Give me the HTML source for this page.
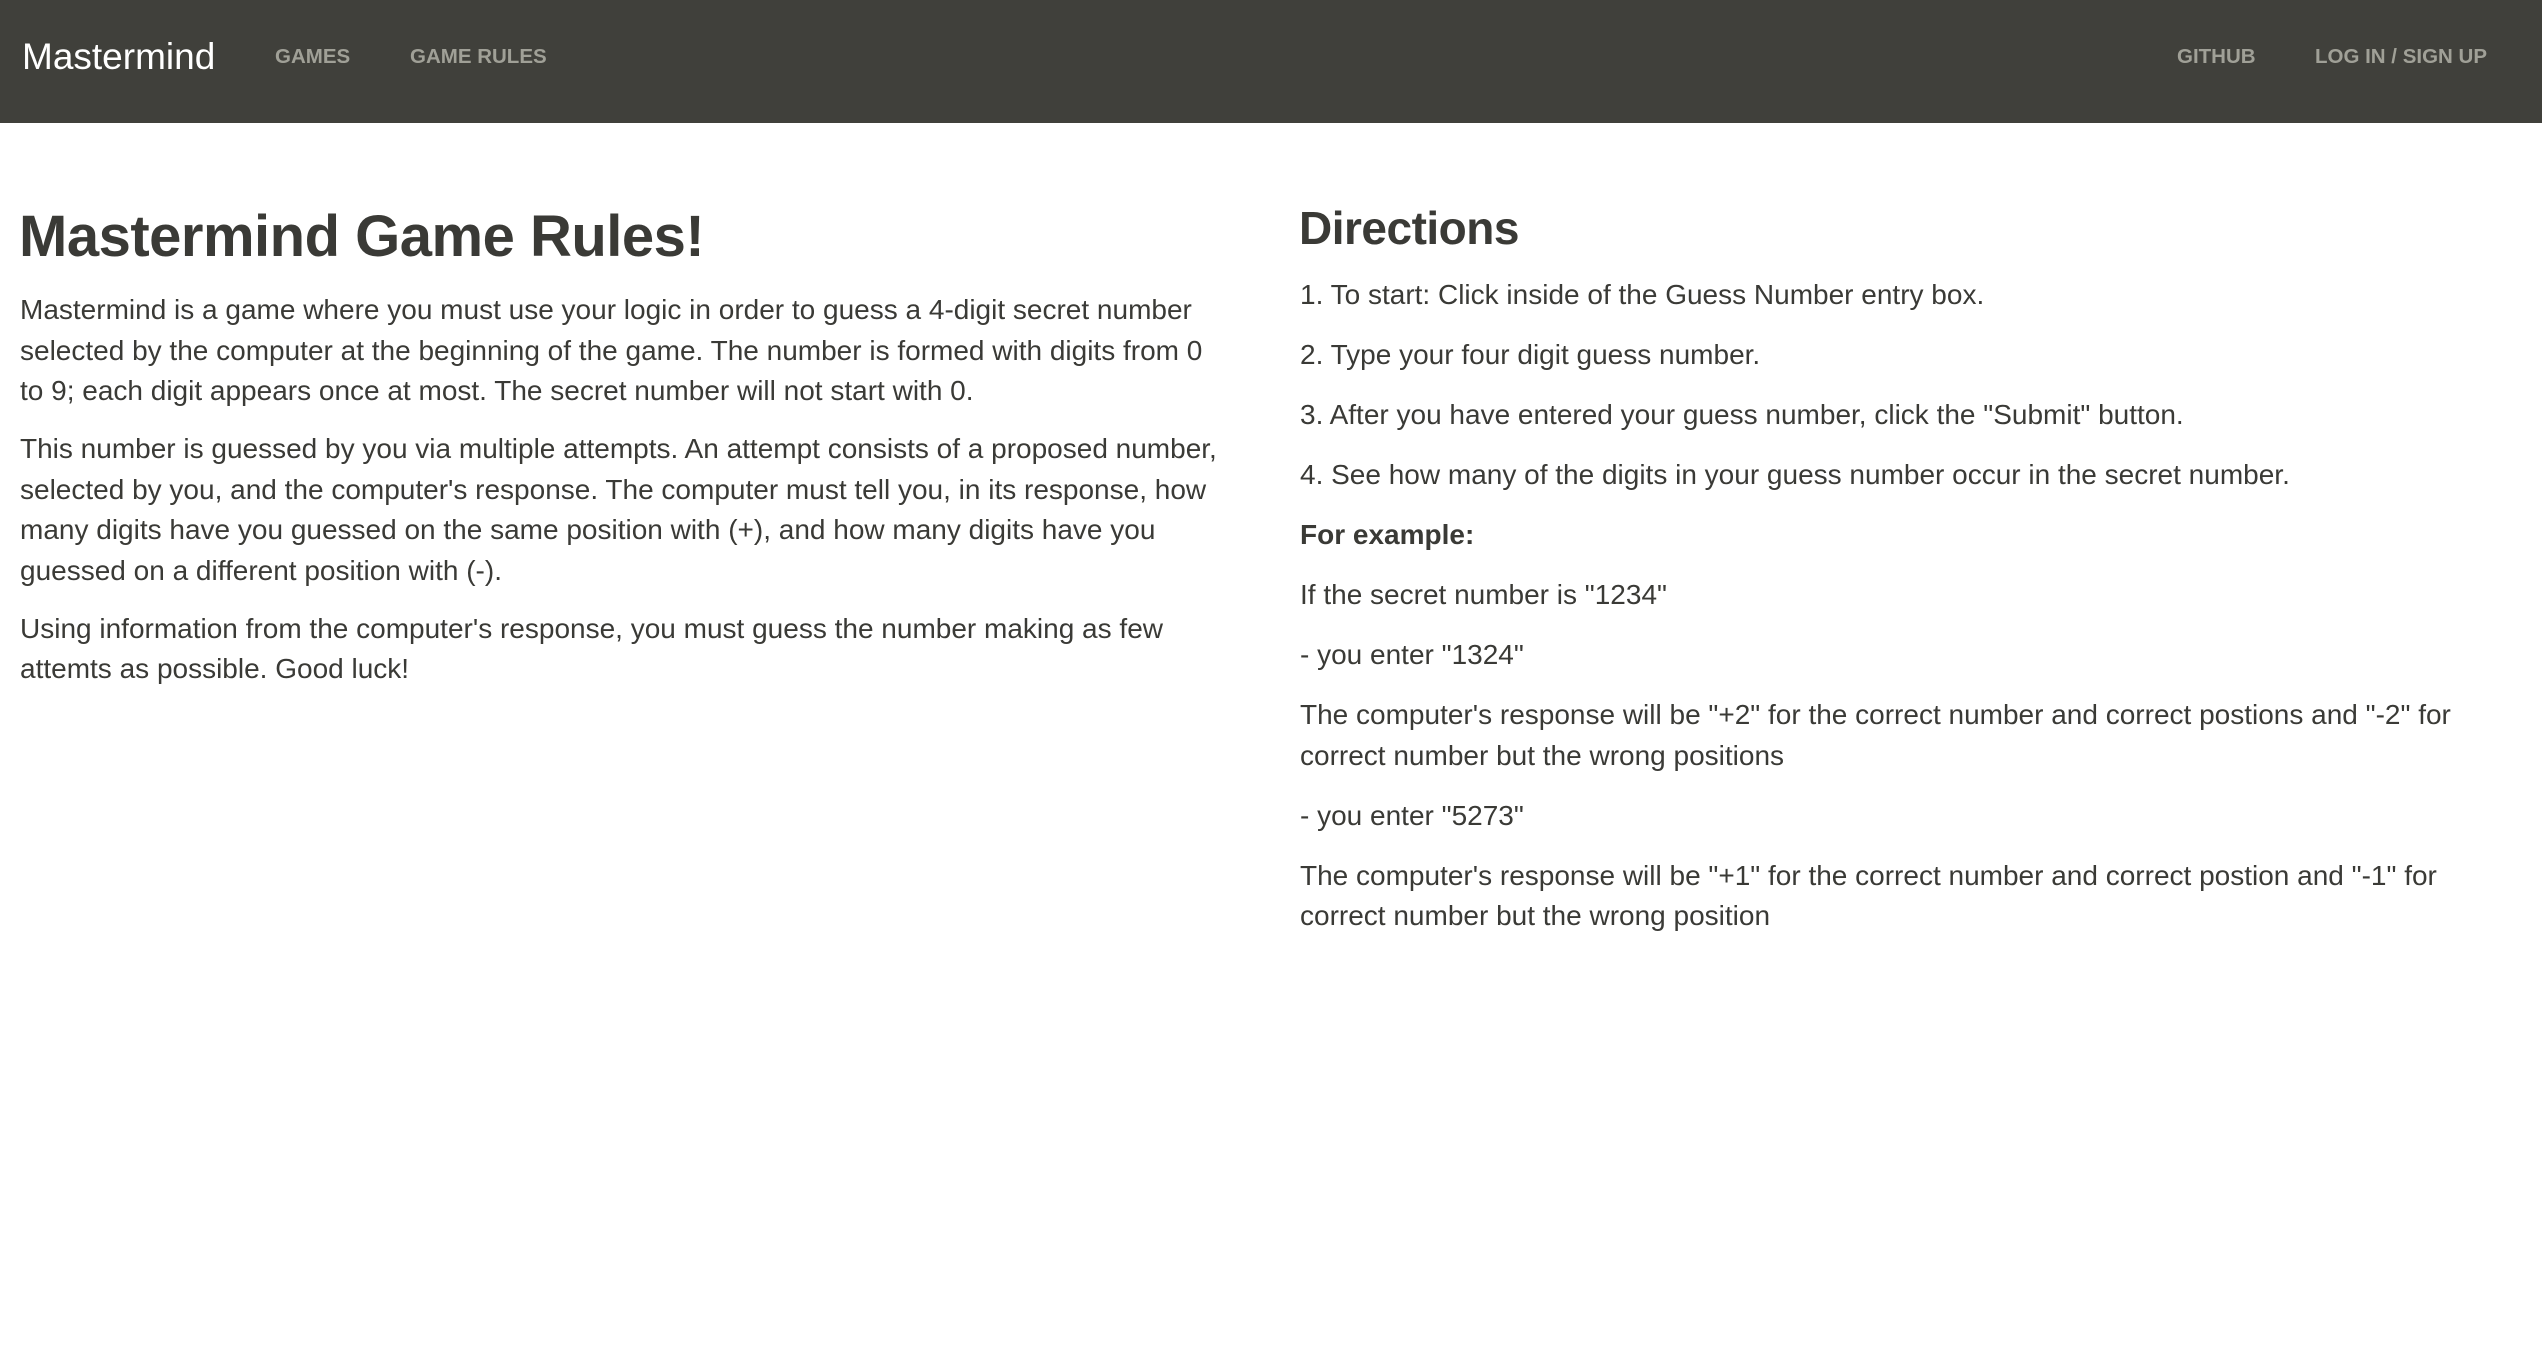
<!DOCTYPE html>
<html><head><meta charset="utf-8"><style>
body{margin:0;width:2542px;height:1372px;background:#fff;font-family:"Liberation Sans",sans-serif;color:#3a3a36;position:relative;overflow:hidden}
.nav{position:absolute;left:0;top:0;width:2542px;height:123px;background:#40403b}
.nav div{position:absolute;top:0;line-height:114px;white-space:nowrap}
.brand{left:22px;font-size:37px;color:#fff}
.lnk{font-size:20.5px;font-weight:bold;color:#a0a097}
h1{position:absolute;left:19px;top:202px;margin:0;font-size:58px;line-height:70px;font-weight:bold;white-space:nowrap;letter-spacing:-0.5px}
h2{position:absolute;left:1299px;top:198px;margin:0;font-size:46px;line-height:60px;font-weight:bold;white-space:nowrap;letter-spacing:-0.5px}
.col{position:absolute;font-size:28px;line-height:40.5px;white-space:nowrap}
.col p{margin:0 0 17.5px}
.r p{margin:0 0 19.5px}
</style></head><body>
<div class="nav">
<div class="brand">Mastermind</div>
<div class="lnk" style="left:275px">GAMES</div>
<div class="lnk" style="left:410px">GAME RULES</div>
<div class="lnk" style="left:2177px">GITHUB</div>
<div class="lnk" style="left:2315px">LOG IN / SIGN UP</div>
</div>
<h1>Mastermind Game Rules!</h1>
<div class="col" style="left:20px;top:290px">
<p>Mastermind is a game where you must use your logic in order to guess a 4-digit secret number<br>selected by the computer at the beginning of the game. The number is formed with digits from 0<br>to 9; each digit appears once at most. The secret number will not start with 0.</p>
<p>This number is guessed by you via multiple attempts. An attempt consists of a proposed number,<br>selected by you, and the computer's response. The computer must tell you, in its response, how<br>many digits have you guessed on the same position with (+), and how many digits have you<br>guessed on a different position with (-).</p>
<p>Using information from the computer's response, you must guess the number making as few<br>attemts as possible. Good luck!</p>
</div>
<h2>Directions</h2>
<div class="col r" style="left:1300px;top:275px">
<p>1. To start: Click inside of the Guess Number entry box.</p>
<p>2. Type your four digit guess number.</p>
<p>3. After you have entered your guess number, click the "Submit" button.</p>
<p>4. See how many of the digits in your guess number occur in the secret number.</p>
<p><b>For example:</b></p>
<p>If the secret number is "1234"</p>
<p>- you enter "1324"</p>
<p>The computer's response will be "+2" for the correct number and correct postions and "-2" for<br>correct number but the wrong positions</p>
<p>- you enter "5273"</p>
<p>The computer's response will be "+1" for the correct number and correct postion and "-1" for<br>correct number but the wrong position</p>
</div>
</body></html>
